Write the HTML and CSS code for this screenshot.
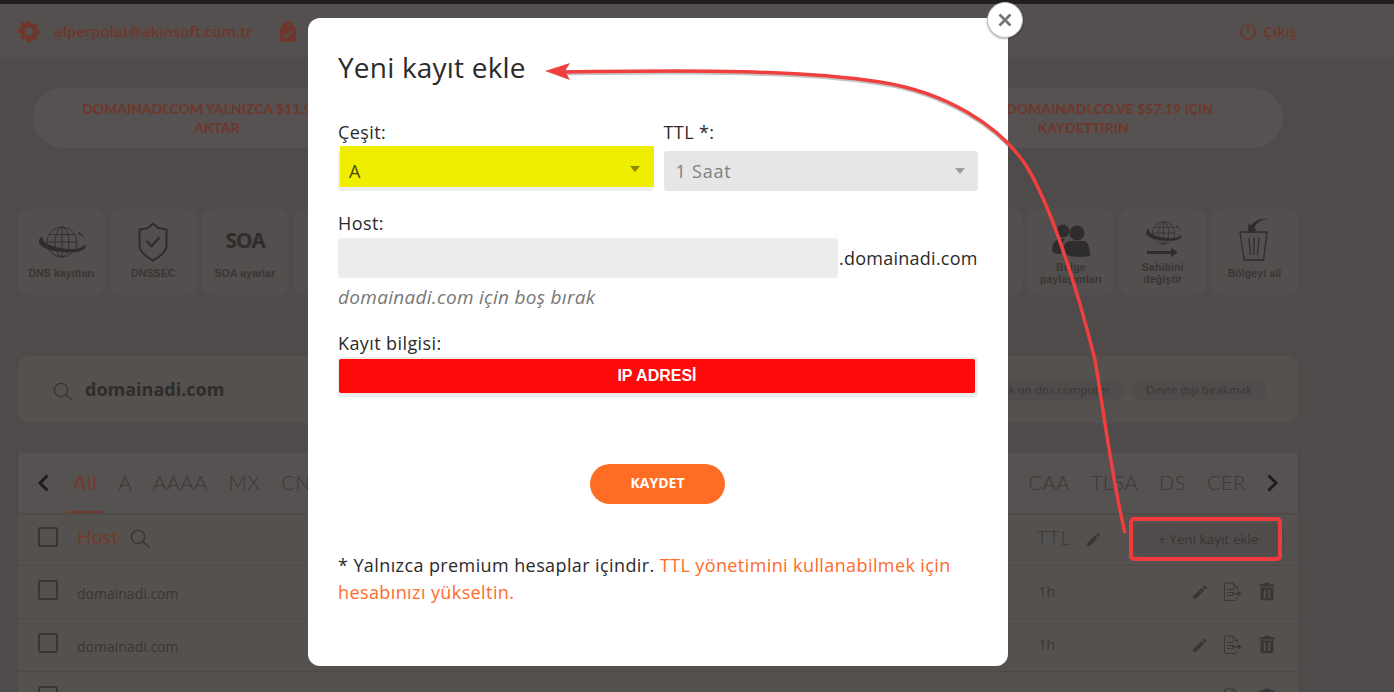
FILE: index.html
```html
<!DOCTYPE html>
<html lang="tr">
<head>
<meta charset="utf-8">
<title>Yeni kayıt ekle</title>
<link rel="stylesheet" href="styles.css">
</head>
<body>
<svg class="defs" width="0" height="0" aria-hidden="true">
  <symbol id="search" viewBox="0 0 20 20"><circle cx="8" cy="8" r="6.6" fill="none" stroke="currentColor" stroke-width="1.4"/><path d="M13 13l6.5 5.5" fill="none" stroke="currentColor" stroke-width="1.6"/></symbol>
  <symbol id="pencil" viewBox="0 0 24 24"><path fill="currentColor" d="M3 17.25V21h3.75L17.81 9.94l-3.75-3.75L3 17.25zM20.71 7.04a1 1 0 000-1.41l-2.34-2.34a1 1 0 00-1.41 0l-1.83 1.83 3.75 3.75 1.83-1.83z"/></symbol>
  <symbol id="doc" viewBox="0 0 20 20"><path fill="none" stroke="currentColor" stroke-width="1" d="M2.5 1h8l4 4.500V8M10.500 1v4.500h4M2.500 1a1 1 0 00-1 1v15.500a1 1 0 001 1h10a1 1 0 001-1V15"/><path fill="none" stroke="currentColor" stroke-width="1" d="M4 7.500h7M4 10.500h7M4 13.500h6"/><path fill="currentColor" d="M9 11h6V9l4 2.800-4 2.800v-2H9z"/></symbol>
  <symbol id="trash" viewBox="0 0 24 24"><path fill="currentColor" d="M5 19a2 2 0 002 2h10a2 2 0 002-2V7H5v12zM8.500 9.500h2v9h-2v-9zm5 0h2v9h-2v-9zM20 3.500h-4.500l-1-1.500h-5l-1 1.500H4V6h16V3.500z"/></symbol>
  <symbol id="globe" viewBox="0 0 48 32"><g fill="none" stroke="currentColor" stroke-width=".9"><circle cx="24" cy="16" r="15"/><ellipse cx="24" cy="16" rx="7" ry="15"/><path d="M24 1v30M9 16h30M11 8.500h26M11 23.500h26"/></g><path fill="currentColor" d="M1 14c-1 5 5 9 15 11 11 2 24 2 29-1 3-2 3-4 2-6-1 3-6 5-14 5-7 0-18-2-23-5-4-2-6-4-5-7-2 0-3 1-4 3zM40 8c3 1 6 3 7 5-1-3-3-5-6-7z"/></symbol>
  <symbol id="shield" viewBox="0 0 30 40"><path fill="none" stroke="currentColor" stroke-width="2" d="M15 1.500L20 6l8.500 1.500V23c0 7-7 12-13.500 15.500C8.500 35 1.500 30 1.500 23V7.500L10 6z"/><path fill="none" stroke="currentColor" stroke-width="2.400" d="M8.500 19l5 5 8-8.500"/></symbol>
</svg>

<div class="topline"></div>
<header class="header">
  <svg class="ico-gear" viewBox="0 0 24 24"><path fill="currentColor" fill-rule="evenodd" d="M10 1h4l.6 3.200 1.900.8L19.200 3l2.800 2.800-2 2.700.8 1.900L24 11v4l-3.200.6-.8 1.900 2 2.700-2.800 2.800-2.700-2-1.900.8L14 24h-4l-.6-3.200-1.900-.8-2.700 2L2 19.200l2-2.700-.8-1.900L0 14v-4l3.200-.6.800-1.900-2-2.700L4.800 2l2.700 2 1.900-.8zM12 8a4.500 4.500 0 100 9 4.500 4.500 0 000-9z"/></svg>
  <span class="email">alperpolat@akinsoft.com.tr</span>
  <svg class="ico-tag" viewBox="0 0 16 22"><path fill="currentColor" d="M8 0l2.500 3h1.500l4 5v12a2 2 0 01-2 2H2a2 2 0 01-2-2V8l4-5h1.500z"/><path fill="none" stroke="#54504f" stroke-width="1.800" d="M3.500 14l3.200 3.200 6-6"/><circle cx="8" cy="5.500" r="1.200" fill="#54504f"/></svg>
  <span class="logout">
    <svg class="ico-power" viewBox="0 0 18 20"><path fill="none" stroke="currentColor" stroke-width="2" stroke-linecap="round" d="M9 1v8M5 4a8 8 0 108 0"/></svg>
    <span>Çıkış</span>
  </span>
</header>

<main class="page">
  <section class="promo">
    <p class="promo-text left">DOMAINADI.COM YALNIZCA $11.99 İÇİN<br>AKTAR</p>
    <p class="promo-text right">AYRICA DOMAINADI.CO.VE $57.19 IÇIN<br>KAYDETTIRIN</p>
  </section>

  <section class="tools">
    <div class="tool"><svg class="t-globe" viewBox="0 0 48 32"><use href="#globe"/></svg><span>DNS kayıtları</span></div>
    <div class="tool"><svg class="t-shield" viewBox="0 0 30 40"><use href="#shield"/></svg><span>DNSSEC</span></div>
    <div class="tool"><b class="soa">SOA</b><span>SOA ayarlar</span></div>
    <div class="tool"></div><div class="tool"></div><div class="tool"></div><div class="tool"></div>
    <div class="tool"></div><div class="tool"></div><div class="tool"></div><div class="tool"></div>
    <div class="tool">
      <svg class="t-people" viewBox="0 0 40 36"><circle cx="12" cy="8" r="6.500" fill="currentColor"/><circle cx="26" cy="10" r="7.500" fill="currentColor"/><path fill="currentColor" d="M1 28c0-7 3-12 8-12h5c-3 3-4 8-4 15-4 0-9-1-9-3zM12 31c0-8 2-13 7-13h14c4 0 6 7 6 15-8 2-19 1-27-2z"/></svg>
      <span>Bölge<br>paylaşımları</span>
    </div>
    <div class="tool">
      <svg class="t-owner" viewBox="0 0 40 38"><svg x="2" y="0" width="37" height="24" viewBox="0 0 48 32"><use href="#globe"/></svg><path fill="currentColor" d="M4 30h24v-3l7 4.500-7 4.500v-3H4z"/></svg>
      <span>Sahibini<br>değiştir</span>
    </div>
    <div class="tool">
      <svg class="t-bin" viewBox="0 0 32 44"><path fill="none" stroke="currentColor" stroke-width="1.300" d="M2 15h27l-3.500 28H6zM11 21l1.500 17M16 21v17M21 21l-1.500 17"/><path fill="currentColor" d="M31 2C24 2 19 5 16 11l3 2-9 3 .5-9.500 2.500 2C16 4 23 .5 31 2z"/></svg>
      <span>Bölgeyi sil</span>
    </div>
  </section>

  <section class="searchbar">
    <svg class="ico-search-lg"><use href="#search"/></svg>
    <strong class="domain">domainadi.com</strong>
    <span class="chip chip-check">Check on dns.computer</span>
    <span class="chip">Devre dışı bırakmak</span>
  </section>

  <section class="records">
    <nav class="tabs">
      <svg class="chev" viewBox="0 0 12 18"><path fill="none" stroke="currentColor" stroke-width="3" d="M10.500 1.500L3 9l7.500 7.500"/></svg>
      <span class="tab active">All</span><span class="tab">A</span><span class="tab">AAAA</span><span class="tab">MX</span><span class="tab">CNAME</span>
      <span class="tabs-fill"></span>
      <span class="tab">CAA</span><span class="tab">TLSA</span><span class="tab">DS</span><span class="tab tab-clip">CERT</span>
      <svg class="chev chev-r" viewBox="0 0 12 18"><path fill="none" stroke="currentColor" stroke-width="3" d="M1.500 1.500L9 9l-7.500 7.500"/></svg>
    </nav>
    <div class="row row-head">
      <span class="check"></span>
      <span class="host-head">Host</span>
      <svg class="ico-search"><use href="#search"/></svg>
      <span class="fill"></span>
      <span class="ttl-head">TTL</span>
      <svg class="ico-pen-head"><use href="#pencil"/></svg>
      <span class="add-btn">+ Yeni kayıt ekle</span>
    </div>
    <div class="row">
      <span class="check"></span><span class="host">domainadi.com</span><span class="fill"></span><span class="ttl">1h</span>
      <svg class="act"><use href="#pencil"/></svg><svg class="act act-doc"><use href="#doc"/></svg><svg class="act act-trash"><use href="#trash"/></svg>
    </div>
    <div class="row">
      <span class="check"></span><span class="host">domainadi.com</span><span class="fill"></span><span class="ttl">1h</span>
      <svg class="act"><use href="#pencil"/></svg><svg class="act act-doc"><use href="#doc"/></svg><svg class="act act-trash"><use href="#trash"/></svg>
    </div>
    <div class="row">
      <span class="check"></span><span class="host">domainadi.com</span><span class="fill"></span><span class="ttl">1h</span>
      <svg class="act"><use href="#pencil"/></svg><svg class="act act-doc"><use href="#doc"/></svg><svg class="act act-trash"><use href="#trash"/></svg>
    </div>
  </section>
</main>

<section class="modal">
  <h1 class="modal-title">Yeni kayıt ekle</h1>
  <div class="two">
    <div class="field">
      <label class="label">Çeşit:</label>
      <div class="select">
        <div class="marker-yellow"><span>A</span><i class="caret caret-olive"></i></div>
      </div>
    </div>
    <div class="field">
      <label class="label">TTL *:</label>
      <div class="select select-off"><span>1 Saat</span><i class="caret"></i></div>
    </div>
  </div>
  <label class="label label-host">Host:</label>
  <div class="host-line"><div class="input"></div><span class="suffix">.domainadi.com</span></div>
  <p class="hint">domainadi.com için boş bırak</p>
  <label class="label label-info">Kayıt bilgisi:</label>
  <div class="input input-full"><div class="marker-red">IP ADRESİ</div></div>
  <button class="save" type="button">KAYDET</button>
  <p class="note">* Yalnızca premium hesaplar içindir. <span class="note-link">TTL yönetimini kullanabilmek için<br>hesabınızı yükseltin.</span></p>
</section>

<button class="close" type="button" aria-label="Kapat"><svg viewBox="0 0 14 14"><path d="M1.500 1.500l11 11M12.500 1.500l-11 11" fill="none" stroke="currentColor" stroke-width="2.800"/></svg></button>

<svg class="annot" viewBox="0 0 1394 692">
  <path class="annot-shadow" d="M562 74C700 72 800 72 880 84 945 94 1000 127 1027 169 1050 207 1075 282 1095 362 1102 402 1112 482 1124 533"/>
  <path class="annot-line" d="M562 72C700 70 800 70 880 82 945 92 1000 125 1027 167 1050 205 1075 280 1095 360 1102 400 1112 480 1125 533"/>
  <path class="annot-head" d="M545 71l25-8-5 8 5 9z"/>
  <rect class="annot-box" x="1131" y="519" width="149" height="40" rx="3"/>
</svg>
</body>
</html>
```
FILE: styles.css
```css
* { box-sizing: border-box; }
html, body { margin: 0; padding: 0; height: 692px; overflow: hidden; }
body { position: relative; background: #4f4b4a; color: #2f2c2c; font-family: "Open Sans", "Noto Sans", sans-serif; }
.defs { position: absolute; }

.topline { height: 4px; background: #231f1f; }
.header { height: 53px; background: #54504f; display: flex; align-items: center; padding: 0 97px 0 18px; color: #70362a; }
.ico-gear { width: 22px; height: 22px; margin-right: 14px; }
.email { font-size: 15px; font-weight: 600; width: 226px; white-space: nowrap; }
.ico-tag { width: 16px; height: 22px; }
.logout { margin-left: auto; display: flex; align-items: center; gap: 7px; font-size: 15px; font-weight: 600; }
.ico-power { width: 16px; height: 18px; }

.page { padding: 31px 96px 0 18px; }
.promo { margin: 0 15px; height: 60px; border-radius: 30px; background: #565251; display: flex; justify-content: space-between; padding: 0 70px 0 49px; align-items: center; }
.promo-text { margin: 0; font-family: "Lato", sans-serif; font-size: 14px; line-height: 19px; text-align: center; color: #70362a; font-weight: 700; white-space: nowrap; }
.promo-text.left { width: 270px; }

.tools { margin-top: 61px; display: flex; justify-content: space-between; }
.tool { width: 87px; height: 86px; border-radius: 10px; background: #534f4e; display: flex; flex-direction: column; align-items: center; justify-content: flex-end; padding-bottom: 16px; color: #2f2c2c; }
.tool span { font: 700 10.5px/11.500px "Liberation Sans", sans-serif; text-align: center; color: #393635; letter-spacing: .1px; }
.t-globe { width: 48px; height: 32px; margin-bottom: 10px; }
.t-shield { width: 30px; height: 40px; margin-bottom: 6px; }
.soa { font: 700 21px/24px "Noto Sans", sans-serif; letter-spacing: -1px; color: #2f2c2c; margin-bottom: 16px; }
.t-people { width: 40px; height: 36px; margin-bottom: 3px; }
.t-owner { width: 40px; height: 38px; margin-bottom: 3px; }
.t-bin { width: 32px; height: 44px; margin-bottom: 7px; }
.tool:nth-child(n+12) { padding-bottom: 10px; }
.tool:last-child { padding-bottom: 16px; }

.searchbar { margin-top: 61px; height: 67px; border-radius: 10px; background: #55514f; display: flex; align-items: center; padding: 0 31px 0 35px; color: #2f2c2c; }
.ico-search-lg { width: 20px; height: 20px; margin-right: 12px; color: #393635; margin-top: 4px; }
.domain { font-size: 18px; font-weight: 700; margin-right: auto; margin-top: -2px; }
.chip { height: 20px; border-radius: 10px; background: #504c4b; font-size: 11.500px; line-height: 20px; padding: 0 15px; color: #393635; white-space: nowrap; }
.chip-check { margin-right: 6px; }

.records { margin-top: 30px; background: #55514f; }
.tabs { height: 60px; background: #565251; display: flex; align-items: center; padding: 0 19px; color: #3a3736; box-shadow: 0 1px 2px rgba(0,0,0,.15); overflow: hidden; }
.chev { width: 12px; height: 18px; color: #1f1c1c; flex: none; }
.tab { font-family: "Lato", sans-serif; font-size: 20px; font-weight: 300; letter-spacing: .5px; margin-left: 21px; height: 60px; line-height: 58px; position: relative; white-space: nowrap; }
.tab.active { color: #743a2a; margin-left: 24px; font-weight: 400; }
.tab.active::after { content: ""; position: absolute; left: -5px; right: -5px; bottom: 0; height: 2px; background: #743a2a; }
.tabs-fill { flex: 1; }
.tab-clip { width: 39px; overflow: hidden; }
.chev-r { margin-left: 21px; }

.row { height: 53px; display: flex; align-items: center; padding: 0 20px 0 20px; border-top: 1px solid #4d4948; color: #393635; }
.row-head { border-top: 0; height: 52px; padding-right: 11px; }
.check { width: 20px; height: 20px; border: 2px solid #393635; border-radius: 2px; margin-right: 19px; margin-top: -4px; flex: none; }
.host-head { font-family: "Lato", sans-serif; font-size: 19px; font-weight: 400; letter-spacing: .4px; color: #743a2a; margin-top: -6px; }
.ico-search { width: 20px; height: 20px; margin-left: 11px; }
.fill { flex: 1; }
.ttl-head { font-family: "Lato", sans-serif; font-size: 19px; font-weight: 300; letter-spacing: 1px; margin-top: -4px; }
.ico-pen-head { width: 17px; height: 17px; margin: 0 28px 0 14px; }
.add-btn { width: 157px; height: 33px; border-radius: 17px; background: #504c4b; font-size: 13.500px; line-height: 33px; padding-left: 28px; white-space: nowrap; }
.host { font-size: 14px; margin-top: 2px; }
.ttl { font-size: 14px; margin-right: 136px; margin-top: -2px; }
.act { width: 18px; height: 18px; }
.act-doc { width: 20px; height: 20px; margin-left: 14px; }
.act-trash { width: 22px; height: 22px; margin-left: 13px; }

.modal { position: absolute; left: 308px; top: 18px; width: 700px; height: 648px; border-radius: 12px; background: #fff; padding: 30px 30px 0; color: #2c2a2a; }
.modal-title { margin: 0; font-size: 28px; line-height: 38px; font-weight: 400; letter-spacing: .2px; }
.two { display: flex; gap: 11px; margin-top: 34px; }
.field { width: 315px; }
.label { display: block; font-size: 18px; line-height: 24px; letter-spacing: .4px; }
.select { height: 40px; margin-top: 7px; background: #ededed; border-radius: 3px; position: relative; font-size: 18px; }
.select-off { background: #e6e6e6; color: #808080; display: flex; align-items: center; justify-content: space-between; padding: 0 13px 0 12px; letter-spacing: .8px; }
.marker-yellow { position: absolute; left: 2px; right: -1px; top: -5px; height: 41px; background: #f0ee00; color: #4a4a10; display: flex; align-items: center; justify-content: space-between; padding: 9px 14px 0 9px; }
.caret { width: 0; height: 0; border-left: 5px solid transparent; border-right: 5px solid transparent; border-top: 6px solid #9a9a9a; }
.caret-olive { border-top-color: #8a8a00; margin-top: -5px; }
.label-host { margin-top: 20px; }
.host-line { display: flex; align-items: center; margin-top: 3px; }
.input { width: 500px; height: 40px; background: #ededed; border-radius: 3px; }
.suffix { font-size: 18px; letter-spacing: .25px; margin-left: 1px; white-space: nowrap; }
.hint { margin: 7px 0 0; font-size: 19px; letter-spacing: .3px; line-height: 24px; font-style: italic; color: #777; }
.label-info { margin-top: 22px; }
.input-full { width: 640px; margin-top: 2px; padding: 2px 3px 0 1px; }
.marker-red { height: 34px; background: #ff0a0a; border-radius: 2px; color: #fff; font: 700 16px/34px "Liberation Sans", sans-serif; text-align: center; }
.save { display: block; margin: 67px 0 0 252px; width: 135px; height: 40px; border: 0; padding: 0 0 3px; border-radius: 20px; background: #ff6d24; color: #fff; font: 700 14px/36px "Open Sans", sans-serif; }
.note { margin: 48px 0 0; font-size: 18px; letter-spacing: .4px; line-height: 27px; }
.note-link { color: #ff6b2b; }

.close { position: absolute; left: 987px; top: 2px; width: 36px; height: 36px; border-radius: 50%; background: #fff; border: 1px solid #bbb; padding: 0; color: #777; display: flex; align-items: center; justify-content: center; box-shadow: 0 1px 2px rgba(0,0,0,.3); }
.close svg { width: 14px; height: 14px; }

.annot { position: absolute; left: 0; top: 0; width: 1394px; height: 692px; pointer-events: none; }
.annot-line { fill: none; stroke: #ef4040; stroke-width: 3.500; }
.annot-shadow { fill: none; stroke: rgba(60,60,60,.3); stroke-width: 3; }
.annot-head { fill: #ef4040; }
.annot-box { fill: none; stroke: #ef3b3b; stroke-width: 4; }
```
